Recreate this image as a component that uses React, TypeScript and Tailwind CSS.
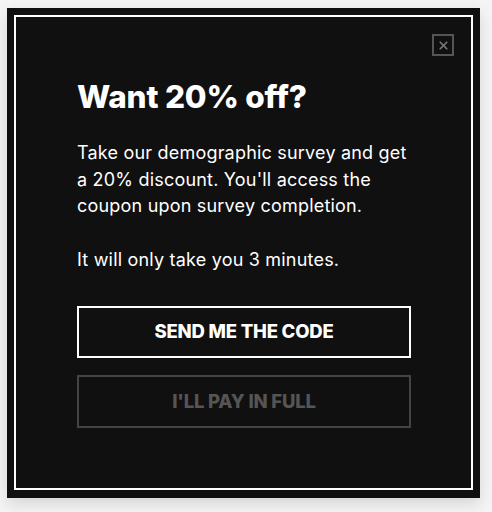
import { X } from "lucide-react";

export default function App() {
  return (
    <div className="min-h-screen bg-[#f4f4f4] pl-[7px] pt-[8px] font-['Inter',sans-serif]">
      <div className="w-[473px] h-[490px] bg-[#101010] p-[7px] shadow-[0_6px_14px_rgba(0,0,0,0.12)]">
        <div className="flex h-[475px] flex-col border-2 border-white px-[61px] pt-[17px]">
          <div className="flex justify-end -mr-[44px]">
            <button className="flex h-[22px] w-[22px] items-center justify-center border-2 border-[#555]">
              <X className="h-[13px] w-[13px] text-[#777]" strokeWidth={3.2} />
            </button>
          </div>
          <h2 className="mt-[22px] text-[31.5px] font-extrabold leading-[38px] tracking-[-0.2px] text-white">
            Want 20% off?
          </h2>
          <div className="mt-[24px] max-w-[332px] text-[18px] leading-[26.5px] tracking-[0.2px] text-white">
            <p>
              Take our demographic survey and get a 20% discount. You'll access the coupon upon survey
              completion.
            </p>
            <p className="mt-[27px]">It will only take you 3 minutes.</p>
          </div>
          <button className="mt-[33px] h-[52px] w-[334px] border-2 border-white text-[18.5px] font-extrabold tracking-[-0.2px] text-white">
            SEND ME THE CODE
          </button>
          <button className="mt-[17px] h-[53px] w-[334px] border-2 border-[#444] text-[18.5px] font-extrabold tracking-[-0.2px] text-[#555]">
            I'LL PAY IN FULL
          </button>
        </div>
      </div>
    </div>
  );
}
